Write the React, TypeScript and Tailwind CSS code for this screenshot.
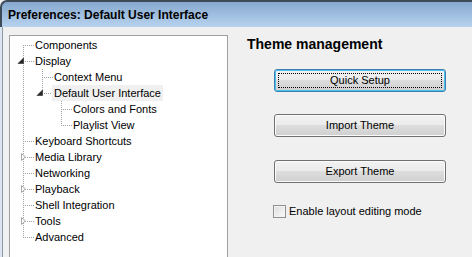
import React from "react";

type Col = "pipe" | "tee" | "first" | "last" | "none";
type Row = { label: string; cols: Col[]; exp?: "open" | "closed"; selected?: boolean };

const rows: Row[] = [
  { label: "Components", cols: ["first"] },
  { label: "Display", cols: ["tee"], exp: "open" },
  { label: "Context Menu", cols: ["pipe", "tee"] },
  { label: "Default User Interface", cols: ["pipe", "last"], exp: "open", selected: true },
  { label: "Colors and Fonts", cols: ["pipe", "none", "tee"] },
  { label: "Playlist View", cols: ["pipe", "none", "last"] },
  { label: "Keyboard Shortcuts", cols: ["tee"] },
  { label: "Media Library", cols: ["tee"], exp: "closed" },
  { label: "Networking", cols: ["tee"] },
  { label: "Playback", cols: ["tee"], exp: "closed" },
  { label: "Shell Integration", cols: ["tee"] },
  { label: "Tools", cols: ["tee"], exp: "closed" },
  { label: "Advanced", cols: ["last"] },
];

const LINE = "#a0a0a0";

function ColCell({ kind, isOwn, exp }: { kind: Col; isOwn: boolean; exp?: "open" | "closed" }) {
  const x = 7.5;
  let v: [number, number] | null = null;
  if (kind === "pipe" || kind === "tee") v = [0, 16];
  if (kind === "first") v = [8, 16];
  if (kind === "last") v = [0, 9];
  const horiz = isOwn && kind !== "none" && kind !== "pipe";
  return (
    <svg width="19" height="16" className="shrink-0 block" shapeRendering="crispEdges">
      {v && (
        <line x1={x} y1={v[0]} x2={x} y2={v[1]} stroke={LINE} strokeWidth="1" strokeDasharray="1 1" />
      )}
      {horiz && (
        <line x1={9} y1={8.5} x2={18} y2={8.5} stroke={LINE} strokeWidth="1" strokeDasharray="1 1" />
      )}
      {isOwn && exp === "open" && (
        <polygon points="7.5,5 7.5,10.5 2,10.5" fill="#262626" stroke="#262626" strokeWidth="0.6" shapeRendering="auto" />
      )}
      {isOwn && exp === "closed" && (
        <polygon points="5.5,4.5 5.5,11.5 9.5,8" fill="#ffffff" stroke="#a6a6a6" strokeWidth="1" shapeRendering="auto" />
      )}
    </svg>
  );
}

function Btn({ label, focused }: { label: string; focused?: boolean }) {
  return (
    <div
      className={
        "relative w-[172px] h-[23px] rounded-[3px] border flex items-center justify-center text-[11px] text-black " +
        (focused
          ? "border-[#3c7fb1] shadow-[inset_0_0_0_1px_#4cc2f1]"
          : "border-[#707070] shadow-[inset_0_0_0_1px_#fbfbfb]")
      }
      style={{
        background:
          "linear-gradient(to bottom, #f2f2f2 0%, #ebebeb 45%, #dddddd 50%, #cfcfcf 100%)",
      }}
    >
      {focused && <span className="absolute inset-[3px] border border-dotted border-black" />}
      <span className="relative">{label}</span>
    </div>
  );
}

export default function App() {
  return (
    <div
      className="w-[472px] h-[257px] overflow-hidden bg-[#f0f0f0] flex flex-col"
      style={{ fontFamily: '"Liberation Sans", Arial, sans-serif' }}
    >
      {/* title bar */}
      <div className="h-[27px] shrink-0 border-t-2 border-l-2 border-[#3d4a58] rounded-tl-[7px] bg-gradient-to-b from-[#86a8ce] to-[#b8d3ef] flex items-center pl-[6px] pt-[1px]">
        <span className="text-[12px] font-bold text-black">Preferences: Default User Interface</span>
      </div>

      {/* body */}
      <div className="flex-1 flex min-h-0">
        <div className="w-[2px] bg-[#dce5ef] shrink-0" />
        <div className="w-px bg-[#8c9aab] shrink-0" />
        <div className="flex-1 flex min-h-0 overflow-hidden">
          {/* tree panel */}
          <div className="ml-[6px] mt-[8px] w-[219px] h-[240px] shrink-0 border border-[#a0a0a0] bg-white pt-[1px] pl-[6px]">
            {rows.map((r, i) => (
              <div key={i} className="flex h-[16px] items-center">
                {r.cols.map((c, j) => (
                  <ColCell key={j} kind={c} isOwn={j === r.cols.length - 1} exp={r.exp} />
                ))}
                <span
                  className={
                    "text-[11px] leading-[16px] text-black whitespace-nowrap -ml-[2px] px-[2px] " +
                    (r.selected ? "bg-[#f0f0f0]" : "")
                  }
                >
                  {r.label}
                </span>
              </div>
            ))}
          </div>

          {/* right pane */}
          <div className="flex-1 flex flex-col pt-[9px] pl-[19px]">
            <div className="text-[14px] leading-[16px] font-bold text-black">Theme management</div>
            <div className="ml-[27px] mt-[17px] flex flex-col">
              <Btn label="Quick Setup" focused />
              <div className="mt-[22px]">
                <Btn label="Import Theme" />
              </div>
              <div className="mt-[23px]">
                <Btn label="Export Theme" />
              </div>
              <div className="mt-[22px] -ml-px flex items-center gap-[3px]">
                <div className="w-[13px] h-[13px] border border-[#8e8f8f] bg-gradient-to-br from-[#dcdcdc] to-[#fbfbfb] shadow-[inset_0_0_0_1px_#f4f4f4]" />
                <span className="text-[11px] leading-[13px] text-black">Enable layout editing mode</span>
              </div>
            </div>
          </div>
        </div>
      </div>
    </div>
  );
}
